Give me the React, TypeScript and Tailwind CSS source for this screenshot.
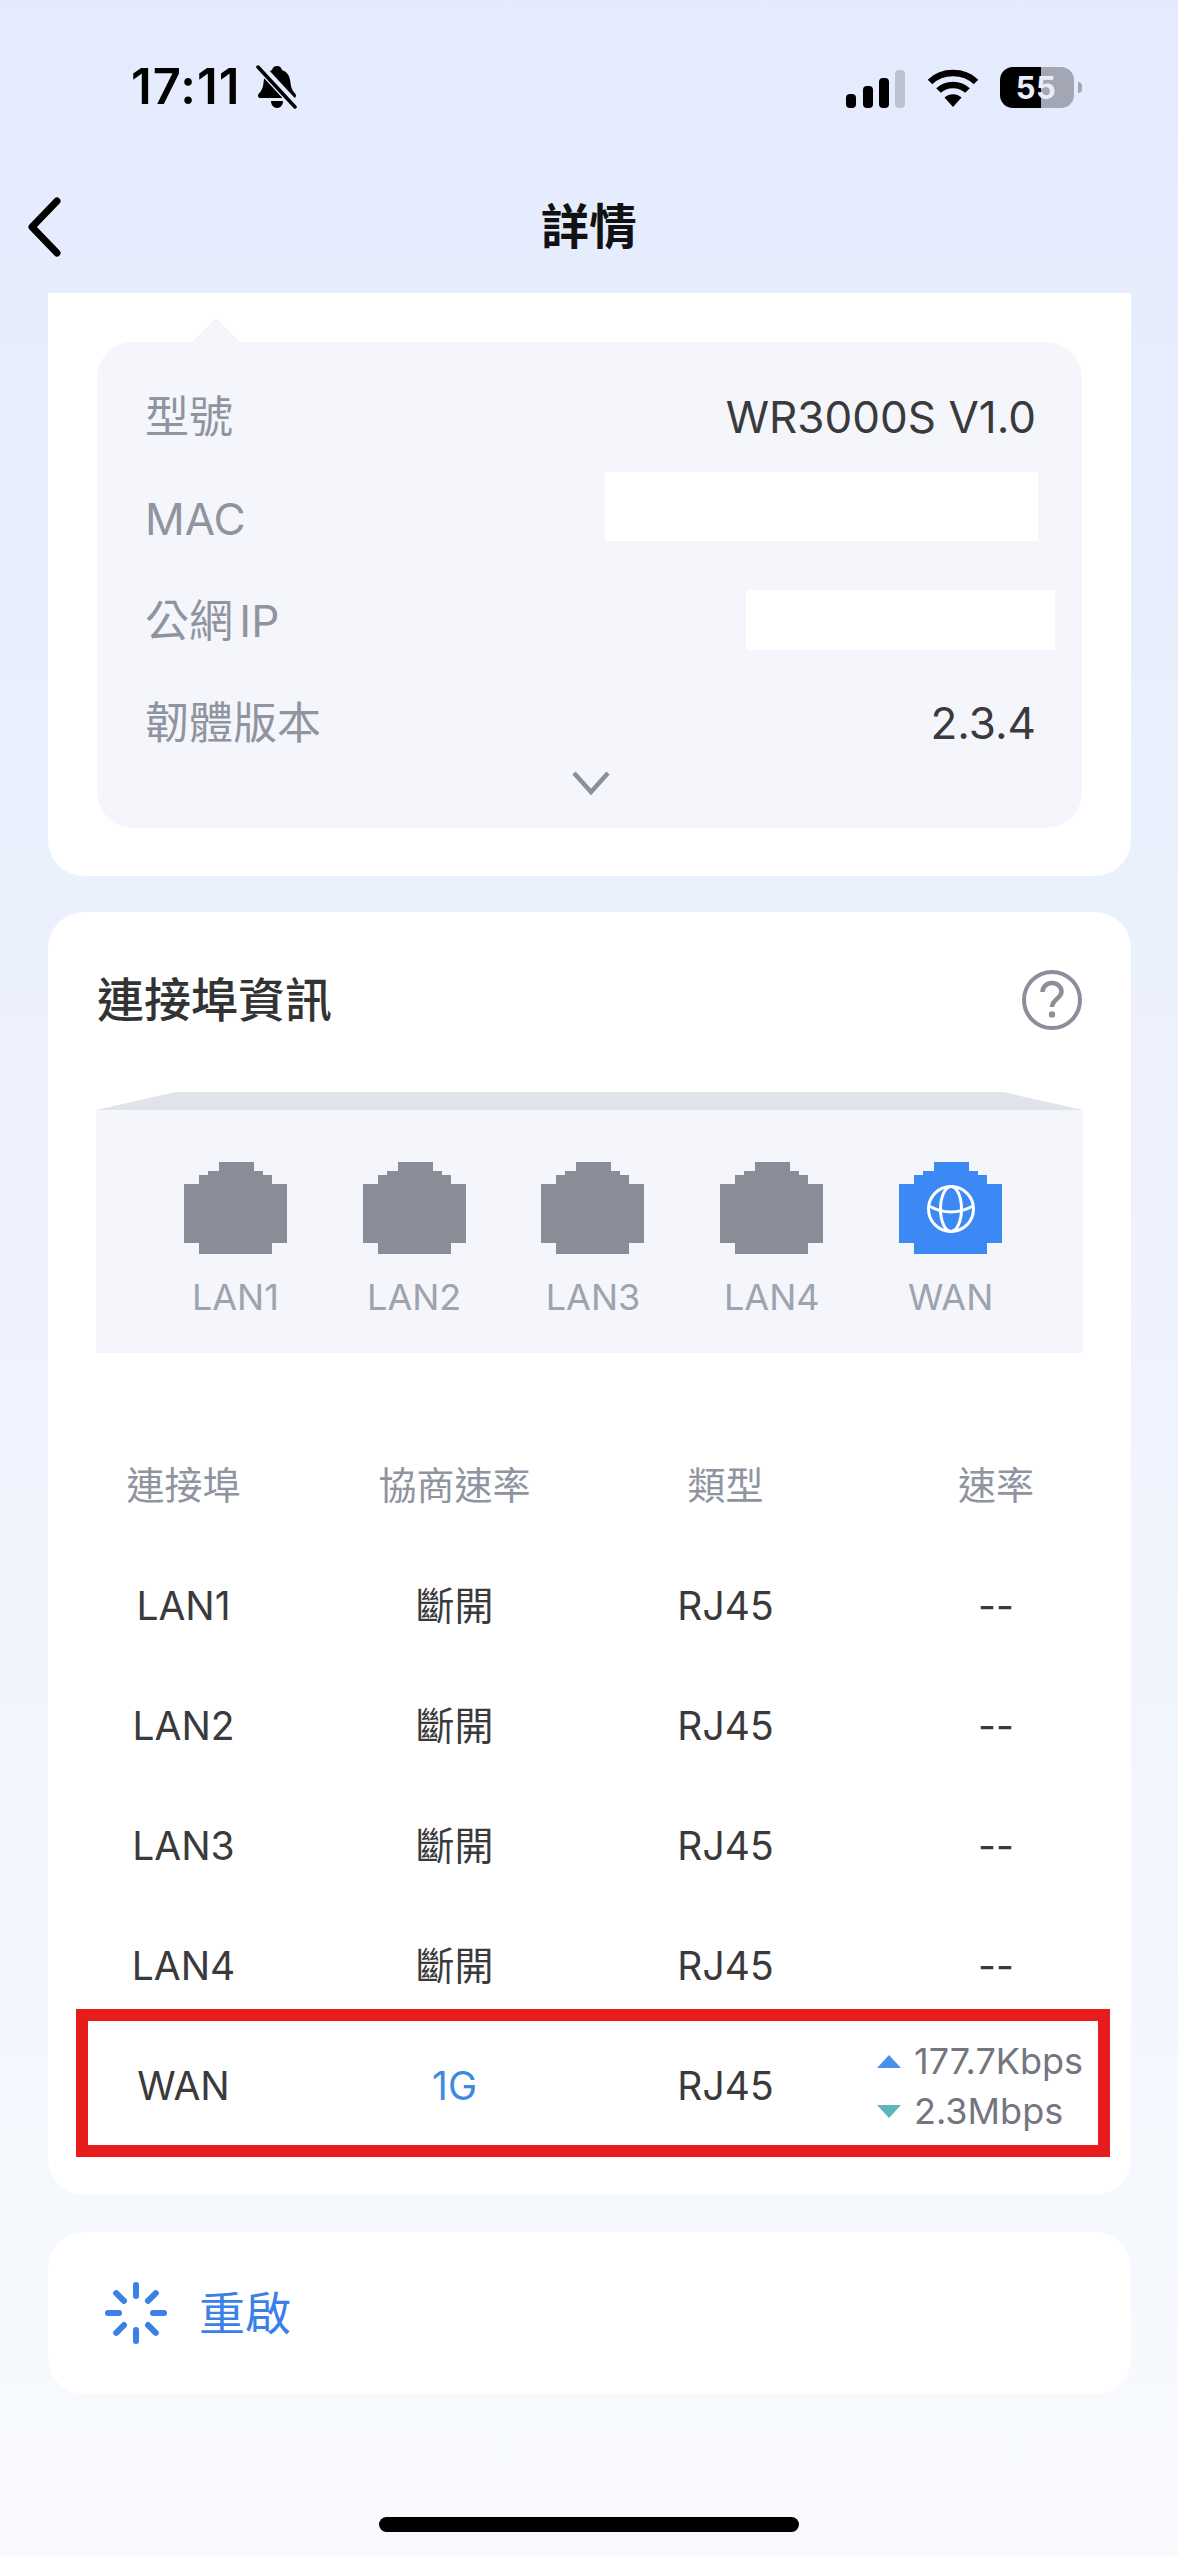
const ports = ["LAN1", "LAN2", "LAN3", "LAN4", "WAN"];

const rows = [
  { port: "LAN1", rate: "斷開" },
  { port: "LAN2", rate: "斷開" },
  { port: "LAN3", rate: "斷開" },
  { port: "LAN4", rate: "斷開" },
];

const portShape =
  "35,0 70,0 70,9 79,9 79,13 88,13 88,22 103,22 103,81 88,81 88,92 15,92 15,81 0,81 0,22 15,22 15,13 24,13 24,9 35,9";

function PortIcon({ active }: { active?: boolean }) {
  return (
    <svg width="103" height="92" viewBox="0 0 103 92">
      <polygon points={portShape} fill={active ? "#3c88f5" : "#8a8d98"} />
      {active && (
        <g fill="none" stroke="#fff" strokeWidth="3">
          <circle cx="52" cy="47" r="22.500" />
          <ellipse cx="52" cy="47" rx="10.500" ry="22.500" />
          <path d="M30 44Q52 56 74 44" />
        </g>
      )}
    </svg>
  );
}

function StatusBar() {
  return (
    <div className="flex h-[130px] items-start justify-between pl-[131px] pr-[96px] pt-[64px]">
      <div className="flex items-center gap-[16px]">
        <span className="text-[49px] leading-[46px] font-semibold tracking-[1px] text-black">17:11</span>
        <svg width="42" height="44" viewBox="0 0 42 44">
          <path d="M21 1c3 0 4.500 2 5 4 6 2 8 7 8.500 13 .5 5 2 8 5 11 1 1.500 .5 4-2 4H4.500c-2.500 0-3-2.500-2-4 3-3 4.500-6 5-11 .5-6 2.500-11 8.500-13 .5-2 2-4 5-4z" />
          <path d="M15 36h12c0 4-2.500 7-6 7s-6-3-6-7z" />
          <path d="M3 1l37 40" stroke="#e4ebfd" strokeWidth="9" />
          <path d="M2 2l37 40" stroke="#000" strokeWidth="3.500" strokeLinecap="round" />
        </svg>
      </div>
      <div className="flex items-center">
        <svg width="59" height="38" viewBox="0 0 59 38" className="mt-[5px]">
          <rect x="0" y="24" width="10" height="14" rx="4" fill="#000" />
          <rect x="17" y="16" width="10" height="22" rx="4" fill="#000" />
          <rect x="33" y="8" width="10" height="30" rx="4" fill="#000" />
          <rect x="49" y="0" width="10" height="38" rx="4" fill="#bcc2d0" />
        </svg>
        <svg width="50" height="38" viewBox="0 0 50 38" className="ml-[23px] mt-[4px]">
          <path d="M2 13C14 1 36 1 48 13" fill="none" stroke="#000" strokeWidth="6.500" />
          <path d="M10.500 21.500C18 14 32 14 39.500 21.500" fill="none" stroke="#000" strokeWidth="6.500" />
          <path d="M16.500 28.500C21 24 29 24 33.500 28.500L25 38z" fill="#000" />
        </svg>
        <div className="relative ml-[22px] mt-[3px] flex h-[41px] w-[74px] overflow-hidden rounded-[13px]">
          <div className="w-[41px] bg-black" />
          <div className="flex-1 bg-[#a3a7b3]" />
          <span className="absolute inset-0 pr-[2px] text-center text-[31px] leading-[41px] font-bold tracking-[0.5px] text-[#e9edf9]">
            55
          </span>
        </div>
        <div className="ml-[4px] mt-[3px] h-[11px] w-[4px] rounded-r-full bg-[#a3a7b3]" />
      </div>
    </div>
  );
}

function Header() {
  return (
    <div className="relative flex h-[163px] items-start justify-center pt-[65px]">
      <svg width="36" height="60" viewBox="0 0 36 60" className="absolute left-[26px] top-[67px]">
        <path d="M31 4 6 30l25 26" fill="none" stroke="#000" strokeWidth="7" strokeLinecap="round" strokeLinejoin="round" />
      </svg>
      <span className="text-[48px] leading-[64px] font-semibold text-[#111]">詳情</span>
    </div>
  );
}

function InfoRow({ label, value }: { label: string; value?: string }) {
  return (
    <div className="flex h-[102px] items-center justify-between">
      <span className="text-[44px] [word-spacing:-6px] text-[#8f94a0]">{label}</span>
      {value && <span className="text-[44px] text-[#3a3a3c]">{value}</span>}
    </div>
  );
}

function DeviceCard() {
  return (
    <div className="ml-[48px] mr-[47px] h-[583px] rounded-b-[36px] bg-white px-[49px] pt-[49px]">
      <div className="relative h-[486px] rounded-[36px] bg-[#f4f6fb] pl-[48px] pr-[46px] pt-[24px]">
        <svg width="48" height="24" viewBox="0 0 48 24" className="absolute left-[95px] top-[-24px]">
          <polygon points="24,0 48,24 0,24" fill="#f4f6fb" />
        </svg>
        <InfoRow label="型號" value="WR3000S V1.0" />
        <InfoRow label="MAC" />
        <InfoRow label="公網 IP" />
        <InfoRow label="韌體版本" value="2.3.4" />
        <div className="mt-[-3px] flex justify-center">
          <svg width="38" height="24" viewBox="0 0 38 24">
            <path d="M2 2l17 19L36 2" fill="none" stroke="#8a8f9c" strokeWidth="4.500" />
          </svg>
        </div>
        {/* blanked out by whoever took the screenshot */}
        <div className="absolute left-[508px] top-[130px] h-[69px] w-[433px] bg-white" />
        <div className="absolute left-[649px] top-[248px] h-[60px] w-[309px] bg-white" />
      </div>
    </div>
  );
}

function TableRow({ port, rate, last }: { port: string; rate: string; last?: boolean }) {
  return (
    <div className="grid h-[120px] grid-cols-[271px_271px_271px_1fr] items-center text-center text-[39px] text-[#3a3a3c]">
      <span>{port}</span>
      <span className={last ? "text-[#3f8ae0]" : ""}>{rate}</span>
      <span>RJ45</span>
      {last ? (
        <div className="flex flex-col items-start gap-[10px] pl-[16px] text-[36px] leading-[40px] text-[#74767f]">
          <div className="flex items-center gap-[13px]">
            <div className="h-0 w-0 border-x-[12px] border-b-[13px] border-x-transparent border-b-[#4a90e8]" />
            <span>177.7Kbps</span>
          </div>
          <div className="flex items-center gap-[13px]">
            <div className="h-0 w-0 border-x-[12px] border-t-[13px] border-x-transparent border-t-[#5fb5bd]" />
            <span>2.3Mbps</span>
          </div>
        </div>
      ) : (
        <span>--</span>
      )}
    </div>
  );
}

function PortCard() {
  return (
    <div className="relative ml-[48px] mr-[47px] mt-[36px] h-[1283px] rounded-[36px] bg-white px-[48px]">
      <div className="flex h-[180px] items-center justify-between pb-[4px] pl-[1px]">
        <span className="text-[47px] font-medium text-[#333]">連接埠資訊</span>
        <svg width="62" height="62" viewBox="0 0 62 62">
          <circle cx="31" cy="31" r="28" fill="none" stroke="#8c8f99" strokeWidth="4" />
          <path d="M21.500 23c0-5 4-9 9.500-9s9.500 4 9.500 8.500c0 7-9.500 7.500-9.500 15.500" fill="none" stroke="#8c8f99" strokeWidth="4.500" />
          <circle cx="31" cy="45.500" r="3.200" fill="#8c8f99" />
        </svg>
      </div>
      <div className="h-[18px] bg-[#e1e3eb] [clip-path:polygon(80px_0,calc(100%-80px)_0,100%_100%,0_100%)]" />
      <div className="h-[243px] bg-[#f4f6fb]">
        <div className="grid grid-cols-5 pl-[50px] pr-[43px] pt-[52px]">
          {ports.map((p) => (
            <div key={p} className="flex flex-col items-center">
              <PortIcon active={p === "WAN"} />
              <span className="mt-[21px] text-[36px] leading-[44px] text-[#9ea3ae]">{p}</span>
            </div>
          ))}
        </div>
      </div>
      <div className="mx-[-48px] mt-[71px]">
        <div className="grid h-[122px] grid-cols-[271px_271px_271px_1fr] items-center text-center text-[38px] text-[#8f94a0]">
          <span>連接埠</span>
          <span>協商速率</span>
          <span>類型</span>
          <span>速率</span>
        </div>
        {rows.map((r) => (
          <TableRow key={r.port} port={r.port} rate={r.rate} />
        ))}
        <TableRow port="WAN" rate="1G" last />
      </div>
      {/* red annotation frame drawn over the screenshot */}
      <div className="absolute bottom-[38px] left-[28px] right-[21px] h-[148px] border-[12px] border-[#e71d1d]" />
    </div>
  );
}

function RebootCard() {
  const ticks = [0, 45, 90, 135, 180, 225, 270, 315];
  return (
    <div className="ml-[48px] mr-[47px] mt-[37px] flex h-[162px] items-center gap-[32px] rounded-[36px] bg-white pl-[57px]">
      <svg width="62" height="62" viewBox="0 0 62 62">
        {ticks.map((a) => (
          <path
            key={a}
            d="M31 3v11"
            transform={`rotate(${a} 31 31)`}
            stroke="#3b7fe8"
            strokeWidth="6"
            strokeLinecap="round"
          />
        ))}
      </svg>
      <span className="text-[46px] text-[#3b7fe8]">重啟</span>
    </div>
  );
}

export default function App() {
  return (
    <div className="flex h-[2556px] w-[1178px] flex-col overflow-hidden bg-gradient-to-b from-[#e4ebfd] to-[#f8fafd] font-['Inter','Noto_Sans_CJK_TC',sans-serif]">
      <StatusBar />
      <Header />
      <DeviceCard />
      <PortCard />
      <RebootCard />
      <div className="mx-auto mt-[123px] h-[15px] w-[420px] rounded-full bg-black" />
    </div>
  );
}
